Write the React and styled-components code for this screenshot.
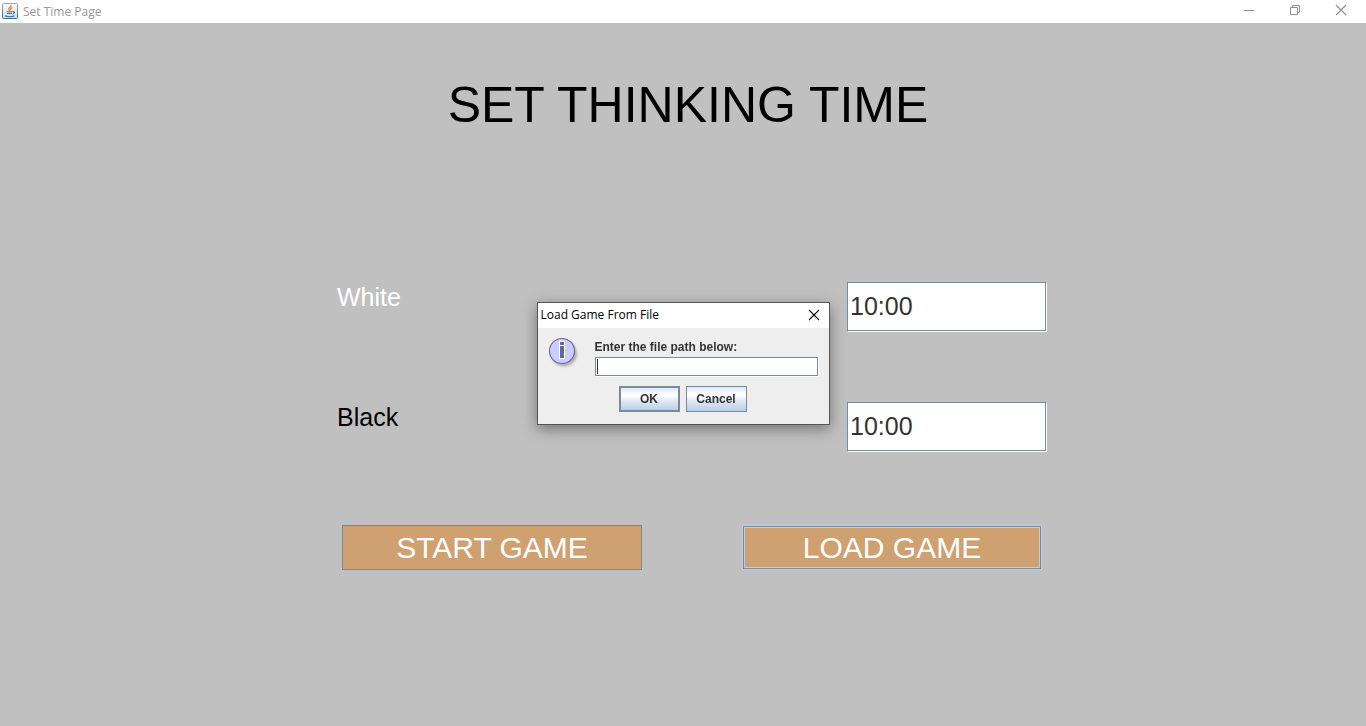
import React from "react";
import styled, { createGlobalStyle, css } from "styled-components";

const GlobalStyle = createGlobalStyle`
  * { box-sizing: border-box; }
  body { margin: 0; background: #c0c0c0; font-family: "Liberation Sans", Arial, sans-serif; }
  button, input { font-family: inherit; margin: 0; border-radius: 0; outline: none; }
`;

const Frame = styled.div`
  min-height: 100vh;
  display: flex;
  flex-direction: column;
`;

const TitleBar = styled.header`
  height: 23px;
  display: flex;
  align-items: center;
  background: #fff;
  padding: 0 0 1px 2px;
`;

const WindowTitle = styled.span`
  flex: 1;
  padding: 1px 0 0 5px;
  color: #999;
  font: 12px/22px "Open Sans", "Noto Sans", sans-serif;
`;

const WindowControls = styled.div`
  display: flex;
  align-self: stretch;
  padding-right: 2px;
`;

const WindowButton = styled.button`
  width: ${(p) => p.$width || 46}px;
  height: 20px;
  padding: 0;
  border: 0;
  background: transparent;
  color: ${(p) => p.$color || "#8f8f8f"};
  display: flex;
  align-items: center;
  justify-content: center;
`;

const Main = styled.main`
  padding: 52px 0 0 18px;
  display: flex;
  flex-direction: column;
  align-items: center;
`;

const Heading = styled.h1`
  margin: 0 0 147px;
  padding-right: 8px;
  font-size: 50px;
  line-height: 60px;
  font-weight: 400;
  color: #000;
`;

const Form = styled.form`
  width: 710px;
  max-width: 100%;
`;

const TimeRow = styled.div`
  display: flex;
  justify-content: space-between;
  align-items: flex-start;
  margin-bottom: 71px;
  padding-right: 1px;
`;

const TimeLabel = styled.label`
  font-size: 25px;
  line-height: 30px;
  color: ${(p) => p.$color};
`;

const field = css`
  border: 1px solid #7a8a99;
  box-shadow: 1px 1px 0 #fff;
  background: #fff;
  color: #333;
`;

const TimeInput = styled.input`
  ${field}
  width: 199px;
  height: 49px;
  padding: 0 2px;
  font-size: 25px;
`;

const Actions = styled.div`
  display: flex;
  justify-content: space-between;
  align-items: center;
  padding: 3px 5px 0;
`;

const GameButton = styled.button`
  width: 300px;
  height: 45px;
  padding: 0;
  border: 1px solid #7a8a99;
  background: #cfa170;
  color: #fff;
  font-size: 30px;
  ${(p) =>
    p.$highlight &&
    css`
      width: 298px;
      height: 43px;
      margin-right: 1px;
      box-shadow: 0 0 0 1px #b8cfe5, inset 0 0 0 1px #b8cfe5;
    `}
`;

const Overlay = styled.div`
  position: fixed;
  inset: 0;
  display: flex;
  align-items: center;
  justify-content: center;
`;

const Dialog = styled.section`
  width: 293px;
  border: 1px solid #555;
  background: #eee;
  box-shadow: 0 4px 14px rgba(0, 0, 0, 0.4);
`;

const DialogBar = styled.header`
  height: 25px;
  display: flex;
  justify-content: space-between;
  align-items: center;
  padding-left: 3px;
  background: #fff;
`;

const DialogTitle = styled.h2`
  margin: 0;
  color: #000;
  font: 12px/24px "Open Sans", "Noto Sans", sans-serif;
`;

const DialogForm = styled.form`
  padding: 9px 11px 12px 10px;
`;

const Prompt = styled.div`
  display: flex;
  justify-content: space-between;
`;

const PathField = styled.div`
  width: 223px;
`;

const PathLabel = styled.label`
  display: block;
  margin: 3px 0 2px;
  color: #333;
  font-size: 12px;
  line-height: 15px;
  font-weight: 700;
`;

const PathInput = styled.input`
  ${field}
  display: block;
  width: 100%;
  height: 19px;
  padding: 0 2px;
  font-size: 12px;
  background: linear-gradient(#333, #333) 1px 1px / 1px 15px no-repeat #fff;
`;

const DialogActions = styled.div`
  display: flex;
  justify-content: center;
  gap: 6px;
  margin-top: 10px;
`;

const DialogButton = styled.button`
  width: 61px;
  height: 26px;
  padding: 1px 0 0;
  border: ${(p) => (p.$primary ? 2 : 1)}px solid #7a8a99;
  background: linear-gradient(#dde8f3 0%, #fff 30%, #fff 36%, #dde8f3 60%, #b8cfe5 100%);
  color: #333;
  font-size: 12px;
  font-weight: 700;
`;

const JavaIcon = () => (
  <svg width="16" height="16" viewBox="0 0 16 16" aria-hidden="true">
    <defs>
      <linearGradient id="tile" x1="0" y1="0" x2="0" y2="1">
        <stop offset="0" stopColor="#fafcfd" />
        <stop offset="1" stopColor="#d3dee6" />
      </linearGradient>
      <linearGradient id="rim" x1="0" y1="0" x2="0" y2="1">
        <stop offset="0" stopColor="#8fa9b9" />
        <stop offset="1" stopColor="#3f6b86" />
      </linearGradient>
    </defs>
    <rect x=".5" y=".5" width="15" height="15" rx="1" fill="url(#tile)" stroke="url(#rim)" />
    <path d="M9 2c.8 1.8-3 2.5-2.2 4.2l1 1.6M10.4 4.4c-1.8.7-2.2 1.4-1.3 2.8" fill="none" stroke="#ee8528" strokeWidth="1.3" />
    <path d="M4.5 8.7h6M5 10.5h5M3 12.8c2 1.2 7.3 1.2 9.5 0M10.8 8.7c2.4-.5 2 1.7 0 2.1" fill="none" stroke="#46718f" strokeWidth="1.1" />
  </svg>
);

const CloseIcon = () => (
  <svg width="12" height="12" viewBox="0 0 12 12" aria-hidden="true">
    <path d="M1 1l10 10M11 1L1 11" fill="none" stroke="currentColor" strokeWidth="1.1" />
  </svg>
);

const InfoIcon = () => (
  <svg width="32" height="32" viewBox="0 0 32 32" aria-hidden="true">
    <defs>
      <filter id="shade" x="-20%" y="-20%" width="140%" height="140%">
        <feGaussianBlur stdDeviation="1.3" />
      </filter>
    </defs>
    <circle cx="16" cy="16.5" r="13" fill="#777" opacity=".5" filter="url(#shade)" />
    <circle cx="14" cy="14" r="12.5" fill="#ccf" stroke="#669" strokeWidth="1.1" />
    <path d="M11 4h6v5h-6zM11 8h6v14h-6z" fill="#fff" />
    <path d="M12 5h4v3h-4zM12 9h4v12h-4z" fill="#669" />
  </svg>
);

const stay = (event) => event.preventDefault();

export default function App() {
  return (
    <>
      <GlobalStyle />
      <Frame>
        <TitleBar>
          <JavaIcon />
          <WindowTitle>Set Time Page</WindowTitle>
          <WindowControls>
            <WindowButton type="button" aria-label="Minimize">
              <svg width="10" height="10" viewBox="0 0 10 10">
                <path d="M0 5.5h10" stroke="currentColor" />
              </svg>
            </WindowButton>
            <WindowButton type="button" aria-label="Restore">
              <svg width="10" height="10" viewBox="0 0 10 10">
                <path d="M.5 2.5h7v7h-7zM2.5 2.5v-2h7v7h-2" fill="none" stroke="currentColor" />
              </svg>
            </WindowButton>
            <WindowButton type="button" aria-label="Close">
              <CloseIcon />
            </WindowButton>
          </WindowControls>
        </TitleBar>
        <Main>
          <Heading>SET THINKING TIME</Heading>
          <Form onSubmit={stay}>
            <TimeRow>
              <TimeLabel htmlFor="white-time" $color="#fff">White</TimeLabel>
              <TimeInput id="white-time" defaultValue="10:00" />
            </TimeRow>
            <TimeRow>
              <TimeLabel htmlFor="black-time" $color="#000">Black</TimeLabel>
              <TimeInput id="black-time" defaultValue="10:00" />
            </TimeRow>
            <Actions>
              <GameButton type="submit">START GAME</GameButton>
              <GameButton type="button" $highlight>LOAD GAME</GameButton>
            </Actions>
          </Form>
        </Main>
      </Frame>
      <Overlay>
        <Dialog role="dialog" aria-modal="true" aria-labelledby="dialog-title">
          <DialogBar>
            <DialogTitle id="dialog-title">Load Game From File</DialogTitle>
            <WindowButton type="button" aria-label="Close dialog" $width={30} $color="#000">
              <CloseIcon />
            </WindowButton>
          </DialogBar>
          <DialogForm onSubmit={stay}>
            <Prompt>
              <InfoIcon />
              <PathField>
                <PathLabel htmlFor="file-path">Enter the file path below:</PathLabel>
                <PathInput id="file-path" />
              </PathField>
            </Prompt>
            <DialogActions>
              <DialogButton type="submit" $primary>OK</DialogButton>
              <DialogButton type="button">Cancel</DialogButton>
            </DialogActions>
          </DialogForm>
        </Dialog>
      </Overlay>
    </>
  );
}
